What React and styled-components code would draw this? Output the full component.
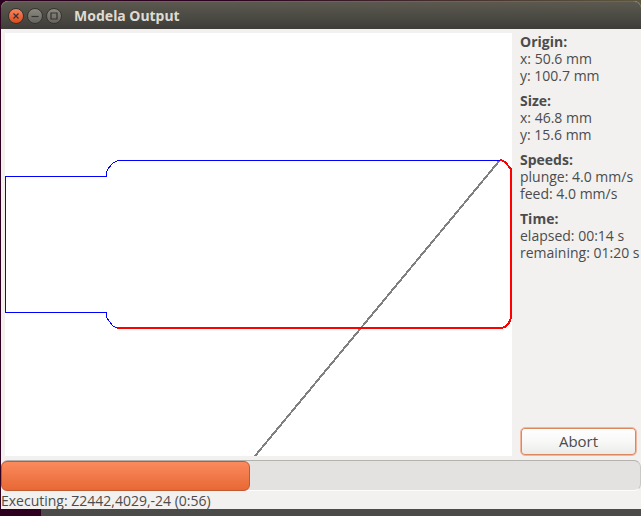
import React from "react";
import styled, { createGlobalStyle } from "styled-components";

const GlobalStyle = createGlobalStyle`
  * { box-sizing: border-box; }
  body {
    margin: 0;
    font-family: "Open Sans", "Noto Sans", sans-serif;
    font-size: 14px;
    line-height: 17px;
    color: #4c4c4c;
  }
`;

const Desktop = styled.div`
  display: flex;
  min-height: 100vh;
  padding: 1px 0 7px 1px;
  background:
    linear-gradient(to right, #2c001e 41px, #4b4b4a 41px) bottom / 100% 7px no-repeat,
    linear-gradient(to right, #2c001e 35%, #5c573c) top / 100% 8px no-repeat,
    #2c001e;
`;

const Window = styled.main`
  flex: 1;
  min-width: 0;
  display: flex;
  flex-direction: column;
  background: #f2f1f0;
  border-radius: 7px 7px 0 0;
`;

const TitleBar = styled.header`
  display: flex;
  align-items: center;
  height: 28px;
  padding: 0 8px 0 7px;
  gap: 3px;
  background: linear-gradient(#5b594f, #3e3d39);
  border-top: 1px solid #69675d;
  border-radius: 7px 7px 0 0;
`;

const WindowButton = styled.button`
  display: flex;
  width: 16px;
  height: 16px;
  padding: 0;
  border: 1px solid #35342f;
  border-radius: 50%;
  color: #34332f;
  background: ${(p) =>
    p.$close ? "linear-gradient(#f68562, #df4c1b)" : "linear-gradient(#8b897f, #66645d)"};
  svg { width: 14px; height: 14px; }
`;

const Title = styled.h1`
  margin: 0 0 0 9px;
  font-family: "Noto Sans", sans-serif;
  font-size: 14px;
  font-weight: 700;
  color: #dfdbd2;
`;

const Workspace = styled.div`
  flex: 1;
  display: flex;
  gap: 8px;
  padding: 4px 0 4px 4px;
`;

const Plot = styled.div`
  flex: 1;
  min-width: 0;
  display: flex;
  background: #fff;
  svg { width: 100%; flex: 1; }
`;

const Sidebar = styled.aside`
  flex: 0 0 121px;
  display: flex;
  flex-direction: column;
  justify-content: space-between;
`;

const Stats = styled.div`
  display: flex;
  flex-direction: column;
  gap: 8px;
`;

const StatTitle = styled.h2`
  margin: 0;
  font-size: 14px;
  font-weight: 700;
`;

const StatLine = styled.p`
  margin: 0;
  white-space: nowrap;
`;

const ActionButton = styled.button`
  height: 29px;
  margin-right: 4px;
  padding: 0;
  font: inherit;
  font-size: 15px;
  color: inherit;
  background: linear-gradient(#fff, #f8f8f7 50%, #eaeae8);
  border: 1px solid #f0b79d;
  border-radius: 5px;
  box-shadow: inset 0 0 0 1px #dd875f;
`;

const ProgressTrack = styled.div`
  display: flex;
  height: 31px;
  background: #e3e2e0;
  border-top: 1px solid #b3b2af;
  border-right: 1px solid #c9c8c6;
  border-bottom: 1px solid #fcfcfc;
  border-radius: 7px;
`;

const ProgressFill = styled.div`
  margin-bottom: -1px;
  background: linear-gradient(#fb8a5d, #e76835);
  border: 1px solid #c05a32;
  border-radius: 6px;
`;

const StatusBar = styled.footer`
  height: 18px;
  white-space: nowrap;
  line-height: 20px;
`;

const groups = [
  { title: "Origin:", lines: ["x: 50.6 mm", "y: 100.7 mm"] },
  { title: "Size:", lines: ["x: 46.8 mm", "y: 15.6 mm"] },
  { title: "Speeds:", lines: ["plunge: 4.0 mm/s", "feed: 4.0 mm/s"] },
  { title: "Time:", lines: ["elapsed: 00:14 s", "remaining: 01:20 s"] },
];

const progress = 39;

const glyphs = {
  Close: "M4.5 4.5l5 5M9.5 4.5l-5 5",
  Minimize: "M3.5 7.5h7",
  Maximize: "M4 4h6v6h-6z",
};

export default function App() {
  return (
    <Desktop>
      <GlobalStyle />
      <Window>
        <TitleBar>
          {Object.entries(glyphs).map(([name, d]) => (
            <WindowButton key={name} type="button" aria-label={name} $close={name === "Close"}>
              <svg viewBox="0 0 14 14" fill="none" stroke="currentColor" strokeWidth="1.2">
                <path d={d} />
              </svg>
            </WindowButton>
          ))}
          <Title>Modela Output</Title>
        </TitleBar>
        <Workspace>
          <Plot>
            <svg viewBox="0 0 507 423" fill="none" shapeRendering="crispEdges" role="img" aria-label="Tool path">
              <path d="M250 423L495 127" stroke="#808080" strokeWidth="2" />
              <path
                d="M495 127.500H112.500L107.500 130.500L102.500 136.500L101.500 139.500V143.500H0.500V279.500H101.500V284.500L107.500 292.500L112.500 295.500"
                stroke="#0000ff"
              />
              <path d="M495 126.500L500 129L506 136V285L504 290L500 294L496 295H112" stroke="#ff0000" strokeWidth="2" />
            </svg>
          </Plot>
          <Sidebar>
            <Stats>
              {groups.map((g) => (
                <section key={g.title}>
                  <StatTitle>{g.title}</StatTitle>
                  {g.lines.map((line) => (
                    <StatLine key={line}>{line}</StatLine>
                  ))}
                </section>
              ))}
            </Stats>
            <ActionButton type="button">Abort</ActionButton>
          </Sidebar>
        </Workspace>
        <ProgressTrack role="progressbar" aria-label="Job progress" aria-valuenow={progress} aria-valuemin={0} aria-valuemax={100}>
          <ProgressFill style={{ width: `${progress}%` }} />
        </ProgressTrack>
        <StatusBar>Executing: Z2442,4029,-24 (0:56)</StatusBar>
      </Window>
    </Desktop>
  );
}
